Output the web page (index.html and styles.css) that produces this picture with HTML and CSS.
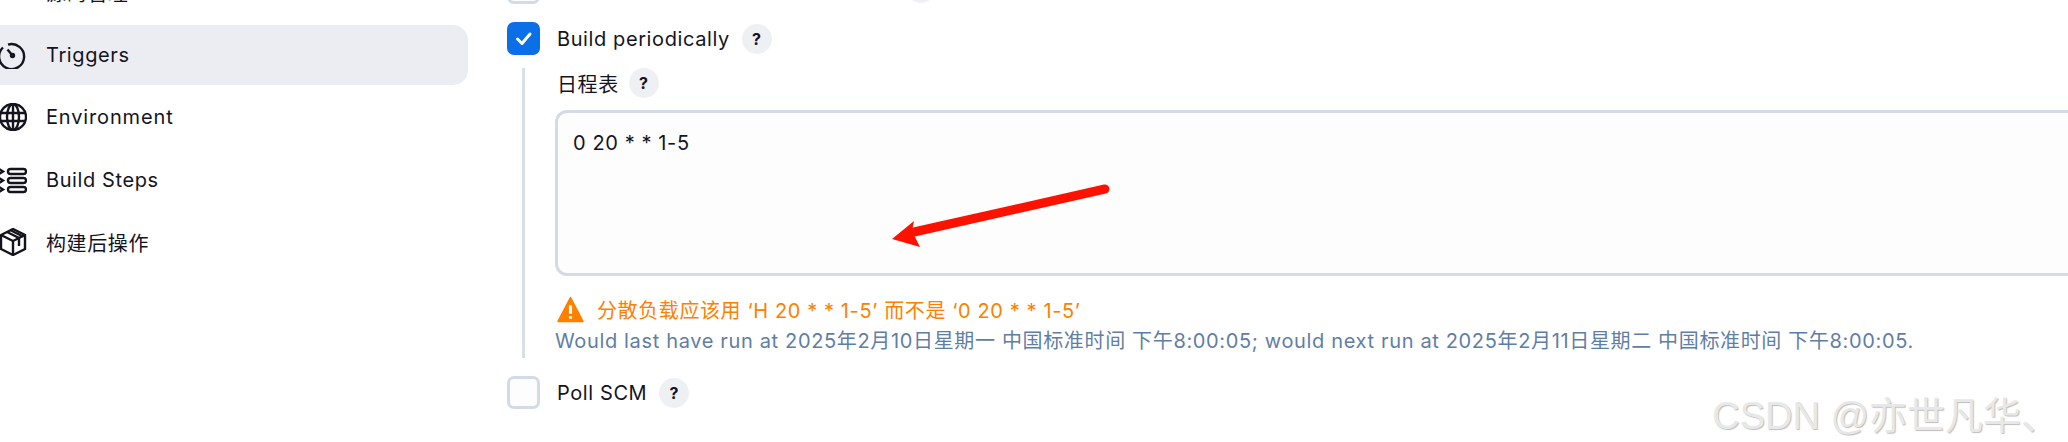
FILE: index.html
```html
<!DOCTYPE html>
<html>
	<head>
		<meta charset="utf-8">
		<title>Triggers</title>
		<link rel="stylesheet" href="styles.css">
	</head>
	<body>
		<div class="page">
			<div class="cebian">
				<a class="xiang">
					<svg viewBox="0 0 28 28"><circle cx="14" cy="14" r="4" class="xian"/></svg>
					<span>源码管理</span>
				</a>
				<a class="xiang dangqian">
					<svg viewBox="0 0 28 28" class="xian">
						<path d="M9 3.600A12.500 12.500 0 1 1 4 6.500"/>
						<path d="M13.500 14.500 8.500 8.500"/>
						<circle cx="13.500" cy="14.500" r="1.500"/>
					</svg>
					<span>Triggers</span>
				</a>
				<a class="xiang">
					<svg viewBox="0 0 28 28" class="xian">
						<circle cx="14" cy="14" r="13"/>
						<ellipse cx="14" cy="14" rx="6" ry="13"/>
						<path d="M14 1v26M1.500 10h25M1.500 18h25"/>
					</svg>
					<span class="kuan">Environment</span>
				</a>
				<a class="xiang">
					<svg viewBox="0 0 28 28" class="xian">
						<rect x="9" y="3" width="18" height="5" rx="2.500"/>
						<rect x="9" y="12" width="18" height="5" rx="2.500"/>
						<rect x="9" y="21" width="18" height="5" rx="2.500"/>
						<path d="M0 3l4 2.500-4 2.500M0 12l4 2.500-4 2.500M0 21l4 2.500-4 2.500"/>
					</svg>
					<span>Build Steps</span>
				</a>
				<a class="xiang">
					<svg viewBox="0 0 28 28" class="xian">
						<path d="M14 1 26 7v14l-12 6-12-6V7z"/>
						<path d="M2 7l12 6 12-6M14 13v14"/>
						<path d="M8 4l12 6v8M12 2.500l12 6"/>
					</svg>
					<span>构建后操作</span>
				</a>
			</div>
			<div class="zhuti">
				<div class="hang shang">
					<span class="kuang"></span>
					<label>Build after other projects are built</label>
					<span class="wen">?</span>
				</div>
				<div class="hang">
					<span class="kuang xuan">
						<svg viewBox="0 0 33 33"><path d="M10.500 17l4.500 4.500 8-9.500"/></svg>
					</span>
					<label>Build periodically</label>
					<span class="wen">?</span>
				</div>
				<div class="zikuai">
					<div class="biaoti">
						<label>日程表</label>
						<span class="wen">?</span>
					</div>
					<div class="shuru">0 20 * * 1-5</div>
					<div class="jinggao">
						<svg viewBox="0 0 26 26"><path d="M13 1.500 25 24.500H1z"/><path d="M13 9v8M13 19.500v2.500" class="tan"/></svg>
						<span>分散负载应该用 ‘H 20 * * 1-5’ 而不是 ‘0 20 * * 1-5’</span>
					</div>
					<div class="tishi">Would last have run at 2025年2月10日星期一 中国标准时间 下午8:00:05; would next run at 2025年2月11日星期二 中国标准时间 下午8:00:05.</div>
				</div>
				<div class="hang">
					<span class="kuang"></span>
					<label>Poll SCM</label>
					<span class="wen">?</span>
				</div>
			</div>
		</div>
		<svg class="jiantou" viewBox="0 0 240 90">
			<path d="M225 13 34 56" class="gan"/>
			<path d="M12 63 34 45 32 55 40 71z"/>
		</svg>
		<div class="shuiyin">CSDN @亦世凡华、</div>
	</body>
</html>
```

FILE: styles.css
```css
* {
	margin: 0;
	padding: 0;
	box-sizing: border-box;
}

html,body{
	width: 100%;
	height: 100%;
	overflow: hidden;
	background-color: #fff;
}

body {
	font-family: Inter, "Noto Sans CJK SC", sans-serif;
	font-size: 20px;
	letter-spacing: 0.6px;
	color: #14141f;
	position: relative;
}

.page {
	display: flex;
}

.cebian {
	flex: none;
	width: 468px;
	margin-top: -38px;
	display: flex;
	flex-direction: column;
	gap: 2.500px;
}

.xiang {
	display: flex;
	align-items: center;
	gap: 19px;
	height: 60px;
	margin-left: -20px;
	padding-left: 19px;
	border-radius: 15px;
}

.xiang svg {
	flex: none;
	width: 28px;
	height: 28px;
}

.kuan {
	letter-spacing: 0.85px;
}

.xian, .xian * {
	fill: none;
	stroke: #14141f;
	stroke-width: 2.400;
}

.dangqian {
	background-color: #ecedf2;
}

.zhuti {
	flex: 1;
	min-width: 0;
	padding-left: 39px;
}

.hang {
	display: flex;
	align-items: center;
	height: 33px;
	margin-top: 18px;
}

.shang {
	margin-top: -29px;
}

.hang label {
	margin-left: 17px;
}

.kuang {
	flex: none;
	width: 33px;
	height: 33px;
	background-color: #fdfdfe;
	border: 3px solid #d3dce6;
	border-radius: 7px;
}

.xuan {
	background-color: #0b6fe8;
	border: none;
}

.xuan svg {
	display: block;
	fill: none;
	stroke: #fff;
	stroke-width: 3;
	stroke-linecap: round;
	stroke-linejoin: round;
}

.wen {
	flex: none;
	width: 30px;
	height: 30px;
	margin-left: 12px;
	border-radius: 50%;
	background-color: #eef0f3;
	font-size: 16px;
	font-weight: 700;
	line-height: 30px;
	text-align: center;
}

.zikuai {
	margin: 13px 0 0 15px;
	border-left: 3px solid #d7dfe9;
	padding-left: 30px;
	height: 290px;
}

.biaoti {
	display: flex;
	align-items: center;
	height: 30px;
	margin: 1px 0 0 2px;
}

.biaoti .wen {
	margin-left: 10px;
}

.shuru {
	width: 1600px;
	height: 166px;
	margin-top: 12px;
	padding: 16px 15px;
	background-color: #fdfdfe;
	border: 3px solid #d3dce6;
	border-radius: 12px;
	line-height: 28px;
}

.jinggao {
	display: flex;
	align-items: center;
	gap: 13px;
	height: 27px;
	margin: 20px 0 0 2px;
	color: #fe8001;
}

.jinggao svg {
	flex: none;
	width: 27px;
	height: 27px;
	fill: #fe8001;
	stroke: #fe8001;
	stroke-width: 1.500;
	stroke-linejoin: round;
}

.jinggao .tan {
	fill: none;
	stroke: #fff;
	stroke-width: 3;
}

.tishi {
	margin-top: 4px;
	color: #5f7ea6;
	line-height: 28px;
	letter-spacing: 0.65px;
	white-space: nowrap;
}

.jiantou {
	position: absolute;
	left: 880px;
	top: 176px;
	width: 240px;
	height: 90px;
	fill: #fd1200;
}

.jiantou .gan {
	fill: none;
	stroke: #fd1200;
	stroke-width: 9;
	stroke-linecap: round;
}

.shuiyin {
	position: absolute;
	right: 9px;
	top: 385px;
	font-family: "Liberation Sans", "Noto Sans CJK SC", sans-serif;
	font-size: 38px;
	letter-spacing: 0;
	color: #e8e8e8;
	text-shadow: 1px 1px 1px #bdbdbd;
	white-space: nowrap;
}
```
